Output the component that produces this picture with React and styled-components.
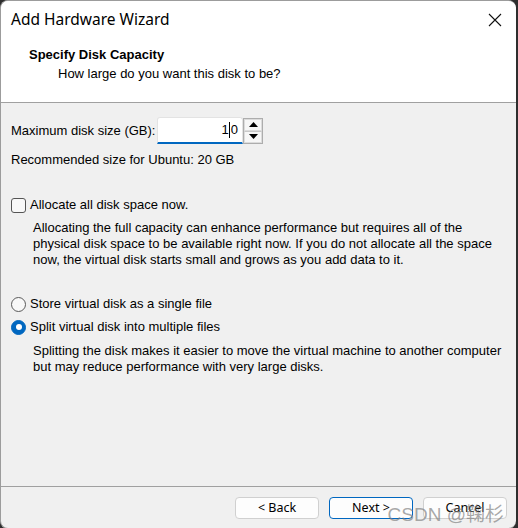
import styled, { createGlobalStyle } from 'styled-components';

const GlobalStyle = createGlobalStyle`
  html, body {
    margin: 0;
    padding: 0;
    background: #2e2e2e;
  }
  body {
    width: 518px;
    height: 528px;
    overflow: hidden;
  }
`;

const Window = styled.div`
  position: relative;
  width: 515px;
  height: 527px;
  display: flex;
  flex-direction: column;
  background: #f0f0f0;
  border: 1px solid #9c9c9c;
  border-right: none;
  border-radius: 8px;
  overflow: hidden;
  font-family: "Liberation Sans", Arial, sans-serif;
  font-size: 13px;
  line-height: 16px;
  color: #000;
`;

const Header = styled.div`
  height: 101px;
  background: #fff;
  border-bottom: 1px solid #a0a0a0;
  flex-shrink: 0;
`;

const TitleBar = styled.div`
  height: 36px;
  display: flex;
  align-items: center;
  justify-content: space-between;
  padding: 0 14px 0 10px;
`;

const Title = styled.div`
  font-family: "Noto Sans", "Open Sans", sans-serif;
  font-size: 15.5px;
`;

const Close = styled.svg`
  width: 14px;
  height: 14px;
  margin-top: 1px;
`;

const Heading = styled.div`
  padding-left: 28px;
  margin-top: 10px;
  font-weight: bold;
  font-size: 13px;
`;

const SubHeading = styled.div`
  padding-left: 57px;
  margin-top: 3px;
`;

const Body = styled.div`
  flex: 1;
  padding: 0 11px 0 10px;
  display: flex;
  flex-direction: column;
`;

const Row = styled.div`
  display: flex;
  align-items: center;
  margin-top: ${(p) => p.$gap || 0}px;
`;

const FieldLabel = styled.label`
  width: 146px;
  flex-shrink: 0;
`;

const Input = styled.div`
  width: 86px;
  height: 27px;
  box-sizing: border-box;
  background: #fff;
  border: 1px solid #e3e3e3;
  border-bottom: 2px solid #0067c0;
  border-radius: 3px 3px 0 0;
  display: flex;
  align-items: center;
  justify-content: flex-end;
  padding-right: 4px;
`;

const Caret = styled.span`
  display: inline-block;
  width: 1px;
  height: 16px;
  background: #000;
  margin-right: 1px;
`;

const Spinner = styled.div`
  width: 20px;
  height: 26px;
  border: 1px solid #adadad;
  box-sizing: border-box;
  display: flex;
  flex-direction: column;
  background: #f4f4f4;
`;

const SpinButton = styled.div`
  flex: 1;
  display: flex;
  align-items: center;
  justify-content: center;
  border: 1px solid #dcdcdc;
  background: #f7f7f7;
  & + & {
    border-top-color: #c8c8c8;
  }
`;

const Text = styled.div`
  margin-top: ${(p) => p.$gap || 0}px;
  padding-left: ${(p) => p.$indent || 0}px;
`;

const Check = styled.span`
  width: 13px;
  height: 13px;
  border: 1px solid #555;
  border-radius: 3px;
  background: #f8f8f8;
  flex-shrink: 0;
  margin-right: 4px;
`;

const Radio = styled.span`
  width: 13px;
  height: 13px;
  border-radius: 50%;
  flex-shrink: 0;
  margin-right: 4px;
  display: flex;
  align-items: center;
  justify-content: center;
  border: 1px solid ${(p) => (p.$on ? '#0067c0' : '#5a5a5a')};
  background: ${(p) => (p.$on ? '#0067c0' : '#f8f8f8')};
  &::after {
    content: '';
    display: ${(p) => (p.$on ? 'block' : 'none')};
    width: 6px;
    height: 6px;
    border-radius: 50%;
    background: #fff;
  }
`;

const Footer = styled.div`
  height: 42px;
  border-top: 1px solid #a0a0a0;
  display: flex;
  justify-content: flex-end;
  align-items: flex-start;
  gap: 10px;
  padding: 10px 9px 0 0;
  box-sizing: border-box;
  flex-shrink: 0;
`;

const Button = styled.button`
  width: 84px;
  height: 22px;
  box-sizing: border-box;
  font-family: "Noto Sans", "Open Sans", sans-serif;
  font-size: 12.5px;
  color: #000;
  background: #fdfdfd;
  border: 1px solid ${(p) => (p.$primary ? '#0067c0' : '#d0d0d0')};
  border-radius: 4px;
  padding: 0;
  line-height: 18px;
`;

const Watermark = styled.div`
  position: absolute;
  right: 12px;
  bottom: 5px;
  font-family: "Liberation Sans", "Noto Sans CJK SC", sans-serif;
  font-size: 19px;
  color: rgba(120, 120, 120, 0.65);
  pointer-events: none;
`;

function Arrow({ up }) {
  return (
    <svg width="9" height="5" viewBox="0 0 9 5">
      <path d={up ? 'M0 5 L4.5 0 L9 5 Z' : 'M0 0 L4.5 5 L9 0 Z'} fill="#000" />
    </svg>
  );
}

export default function App() {
  return (
    <>
      <GlobalStyle />
      <Window>
        <Header>
          <TitleBar>
            <Title>Add Hardware Wizard</Title>
            <Close viewBox="0 0 14 14">
              <path d="M1 1 L13 13 M13 1 L1 13" stroke="#111" strokeWidth="1.1" />
            </Close>
          </TitleBar>
          <Heading>Specify Disk Capacity</Heading>
          <SubHeading>How large do you want this disk to be?</SubHeading>
        </Header>

        <Body>
          <Row $gap={14}>
            <FieldLabel>Maximum disk size (GB):</FieldLabel>
            <Input>
              1<Caret />0
            </Input>
            <Spinner>
              <SpinButton><Arrow up /></SpinButton>
              <SpinButton><Arrow /></SpinButton>
            </Spinner>
          </Row>
          <Text $gap={8}>Recommended size for Ubuntu: 20 GB</Text>

          <Row $gap={29}>
            <Check />
            Allocate all disk space now.
          </Row>
          <Text $gap={7} $indent={22}>
            Allocating the full capacity can enhance performance but requires all of the
            <br />
            physical disk space to be available right now. If you do not allocate all the space
            <br />
            now, the virtual disk starts small and grows as you add data to it.
          </Text>

          <Row $gap={28}>
            <Radio />
            Store virtual disk as a single file
          </Row>
          <Row $gap={7}>
            <Radio $on />
            Split virtual disk into multiple files
          </Row>
          <Text $gap={8} $indent={22}>
            Splitting the disk makes it easier to move the virtual machine to another computer
            <br />
            but may reduce performance with very large disks.
          </Text>
        </Body>

        <Footer>
          <Button>&lt; Back</Button>
          <Button $primary>Next &gt;</Button>
          <Button>Cancel</Button>
        </Footer>
        <Watermark>CSDN @鞠杉</Watermark>
      </Window>
    </>
  );
}
